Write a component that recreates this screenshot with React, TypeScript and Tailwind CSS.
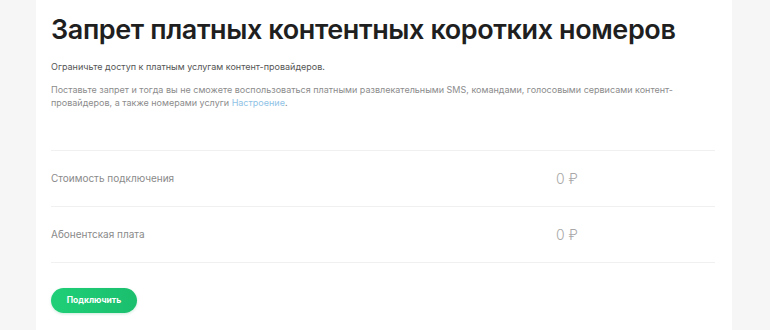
export default function App() {
  const rows = [
    { label: 'Стоимость подключения', value: '0 ₽' },
    { label: 'Абонентская плата', value: '0 ₽' },
  ];

  return (
    <div className="h-[330px] w-[770px] bg-[#f6f6f6] font-['Inter',sans-serif]">
      <div className="ml-[36px] h-full w-[696px] bg-white pl-[15px] pr-[17px] pt-[12px]">
        <h1 className="whitespace-nowrap text-[27px] font-semibold leading-[36px] tracking-[-0.4px] text-[#1f1f1f]">
          Запрет платных контентных коротких номеров
        </h1>
        <p className="mt-[12px] text-[9px] leading-[13px] text-[#555]">
          Ограничьте доступ к платным услугам контент-провайдеров.
        </p>
        <p className="mt-[10px] w-[640px] text-[9px] leading-[13px] text-[#8c8c8c]">
          Поставьте запрет и тогда вы не сможете воспользоваться платными развлекательными SMS, командами, голосовыми сервисами контент-провайдеров, а также номерами услуги <span className="text-[#8fc3e6]">Настроение</span>.
        </p>
        <div className="mt-[41px] border-t border-[#f0f0f0]">
          {rows.map((r) => (
            <div
              key={r.label}
              className="flex h-[56px] items-center border-b border-[#f0f0f0]"
            >
              <span className="w-[505px] text-[10px] text-[#8a8a8a]">{r.label}</span>
              <span className="text-[14px] font-light text-[#a8a8a8]">{r.value}</span>
            </div>
          ))}
        </div>
        <button className="mt-[25px] flex h-[25px] w-[86px] items-center justify-center rounded-full bg-gradient-to-r from-[#1fcf78] to-[#1bbf6d] text-[8.5px] font-bold text-white shadow-[0_1px_3px_rgba(0,150,80,0.2)]">
          Подключить
        </button>
      </div>
    </div>
  );
}
